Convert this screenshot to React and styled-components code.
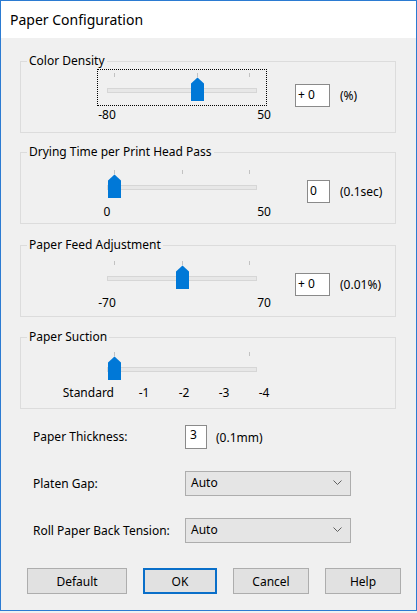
import React from "react"
import styled, { createGlobalStyle } from "styled-components"

const Global = createGlobalStyle`
  html, body {
    margin: 0;
    padding: 0;
    background: #f0f0f0;
  }
`

const sliders = [
    {
        title: "Color Density",
        min: -80, max: 50, value: 0,
        ticks: [-80, 0, 50],
        focus: true,
        gap: 23, pad: 7, boxTop: 15,
        box: "+ 0", boxWidth: 35, unit: "(%)",
    },
    {
        title: "Drying Time per Print Head Pass",
        min: 0, max: 50, value: 0,
        ticks: [0, 25, 50],
        gap: 19, pad: 13, boxTop: 14,
        box: "0", boxWidth: 23, unit: "(0.1sec)",
    },
    {
        title: "Paper Feed Adjustment",
        min: -70, max: 70, value: 0,
        ticks: [-70, 0, 70],
        gap: 21, pad: 11, boxTop: 16,
        box: "+ 0", boxWidth: 35, unit: "(0.01%)",
    },
    {
        title: "Paper Suction",
        min: 0, max: 4, value: 0,
        ticks: [0, 4],
        gap: 20, pad: 10,
        scale: ["Standard", "-1", "-2", "-3", "-4"],
    },
]

const Thumb = () => (
    <svg width="13" height="24" viewBox="0 0 13 24">
        <path d="M6.5 0.5 L13 6.5 L13 24 L0 24 L0 6.5 Z" fill="#0078d7" />
    </svg>
)

const Chevron = () => (
    <svg width="9" height="5" viewBox="0 0 9 5">
        <polyline points="0.5,0.5 4.5,4.5 8.5,0.5" fill="none" stroke="#606060" strokeWidth="1" />
    </svg>
)

const Slider = ({ s }) => {
    const pos = (v) => (v - s.min) / (s.max - s.min) * 135
    return (
        <SliderBox>
            <Control $focus={s.focus}>
                {s.ticks.map((t) => (
                    <Tick key={t} style={{ left: 16 + pos(t) }} />
                ))}
                <Track />
                <ThumbWrap style={{ left: 10 + pos(s.value) }}>
                    <Thumb />
                </ThumbWrap>
            </Control>
            {s.scale ? (
                <Scale>
                    {s.scale.map((l, i) => (
                        <ScaleLabel key={l} $first={i === 0}>{l}</ScaleLabel>
                    ))}
                </Scale>
            ) : (
                <Ends>
                    <EndLabel>{s.min}</EndLabel>
                    <EndLabel>{s.max}</EndLabel>
                </Ends>
            )}
        </SliderBox>
    )
}

const App = () => {
    return (
        <>
            <Global />
            <Window>
                <TitleBar>Paper Configuration</TitleBar>
                <Body>
                    {sliders.map((s) => (
                        <Group key={s.title} $gap={s.gap} $pad={s.pad}>
                            <Caption>{s.title}</Caption>
                            <Slider s={s} />
                            {s.box && (
                                <ValueRow $top={s.boxTop}>
                                    <ValueSlot>
                                        <TextBox $w={s.boxWidth}>{s.box}</TextBox>
                                    </ValueSlot>
                                    <Unit>{s.unit}</Unit>
                                </ValueRow>
                            )}
                        </Group>
                    ))}

                    <Form>
                        <FieldLabel>Paper Thickness:</FieldLabel>
                        <Inline>
                            <SmallBox>3</SmallBox>
                            <Unit $gap={9}>(0.1mm)</Unit>
                        </Inline>

                        <FieldLabel>Platen Gap:</FieldLabel>
                        <Select>
                            <span>Auto</span>
                            <Chevron />
                        </Select>

                        <FieldLabel>Roll Paper Back Tension:</FieldLabel>
                        <Select>
                            <span>Auto</span>
                            <Chevron />
                        </Select>
                    </Form>

                    <Buttons>
                        <Button $w={100}>Default</Button>
                        <Button $w={74} $primary>OK</Button>
                        <Button $w={76}>Cancel</Button>
                        <Button $w={76}>Help</Button>
                    </Buttons>
                </Body>
            </Window>
        </>
    )
}

export default App

const Window = styled.div`
    width: 417px;
    height: 611px;
    box-sizing: border-box;
    border: 1px solid #2b7bd2;
    background: #f0f0f0;
    display: flex;
    flex-direction: column;
    font-family: "Noto Sans", "Liberation Sans", sans-serif;
    font-size: 12px;
    color: #000;
`
const TitleBar = styled.div`
    height: 37px;
    flex: none;
    background: #fff;
    display: flex;
    align-items: center;
    padding-left: 9px;
    font-size: 14px;
`
const Body = styled.div`
    display: flex;
    flex-direction: column;
    padding: 0 20px 0 19px;
`
const Group = styled.section`
    position: relative;
    height: 72px;
    box-sizing: border-box;
    border: 1px solid #dcdcdc;
    margin-top: ${(p) => p.$gap}px;
    padding: ${(p) => p.$pad}px 0 0 76px;
    display: flex;
    align-items: flex-start;
`
const Caption = styled.span`
    position: absolute;
    top: -9px;
    left: 6px;
    padding: 0 2px;
    line-height: 16px;
    background: #f0f0f0;
`
const SliderBox = styled.div`
    width: 170px;
    display: flex;
    flex-direction: column;
`
const Control = styled.div`
    position: relative;
    width: 170px;
    height: 37px;
    box-sizing: border-box;
    border: 1px dotted ${(p) => (p.$focus ? "#000" : "transparent")};
`
const Track = styled.div`
    width: 150px;
    height: 5px;
    box-sizing: border-box;
    margin: 18px 0 0 9px;
    background: #e7e7e7;
    border: 1px solid #d6d6d6;
`
const Tick = styled.div`
    position: absolute;
    top: 3px;
    width: 1px;
    height: 4px;
    background: #c2c2c2;
`
const ThumbWrap = styled.div`
    position: absolute;
    top: 7px;
    width: 13px;
    height: 24px;
    line-height: 0;
`
const Ends = styled.div`
    display: flex;
    justify-content: space-between;
    width: 197px;
    margin: 1px 0 0 -10px;
    line-height: 16px;
`
const EndLabel = styled.span`
    width: 40px;
    text-align: center;
`
const Scale = styled.div`
    display: grid;
    grid-template-columns: 70px repeat(4, 40px);
    margin: 0 0 0 -43px;
    line-height: 16px;
`
const ScaleLabel = styled.span`
    text-align: ${(p) => (p.$first ? "right" : "center")};
    padding-right: ${(p) => (p.$first ? 10 : 0)}px;
`
const ValueRow = styled.div`
    display: flex;
    align-items: center;
    margin-top: ${(p) => p.$top}px;
`
const ValueSlot = styled.div`
    width: 63px;
    display: flex;
    justify-content: flex-end;
`
const TextBox = styled.div`
    width: ${(p) => p.$w}px;
    height: 23px;
    box-sizing: border-box;
    border: 1px solid #8a8a8a;
    background: #fff;
    padding-left: 2px;
    line-height: 20px;
`
const Unit = styled.span`
    margin-left: ${(p) => p.$gap ?? 10}px;
`
const Form = styled.div`
    display: grid;
    grid-template-columns: 152px auto;
    align-items: center;
    row-gap: 22px;
    margin-top: 16px;
    padding-left: 13px;
`
const FieldLabel = styled.span`
    line-height: 16px;
`
const Inline = styled.div`
    display: flex;
    align-items: center;
`
const SmallBox = styled.div`
    width: 22px;
    height: 24px;
    box-sizing: border-box;
    border: 1px solid #8a8a8a;
    background: #fff;
    padding-left: 4px;
    line-height: 18px;
`
const Select = styled.div`
    width: 166px;
    height: 25px;
    box-sizing: border-box;
    border: 1px solid #adadad;
    background: #e5e5e5;
    display: flex;
    align-items: center;
    justify-content: space-between;
    padding: 0 8px 2px 5px;
`
const Buttons = styled.div`
    display: flex;
    gap: 16px;
    margin: 25px -6px 0 0;
    padding-left: 7px;
`
const Button = styled.div`
    flex: none;
    width: ${(p) => p.$w}px;
    height: 26px;
    box-sizing: border-box;
    border: ${(p) => (p.$primary ? "2px solid #0a6fc9" : "1px solid #adadad")};
    background: #e1e1e1;
    display: flex;
    align-items: center;
    justify-content: center;
`
